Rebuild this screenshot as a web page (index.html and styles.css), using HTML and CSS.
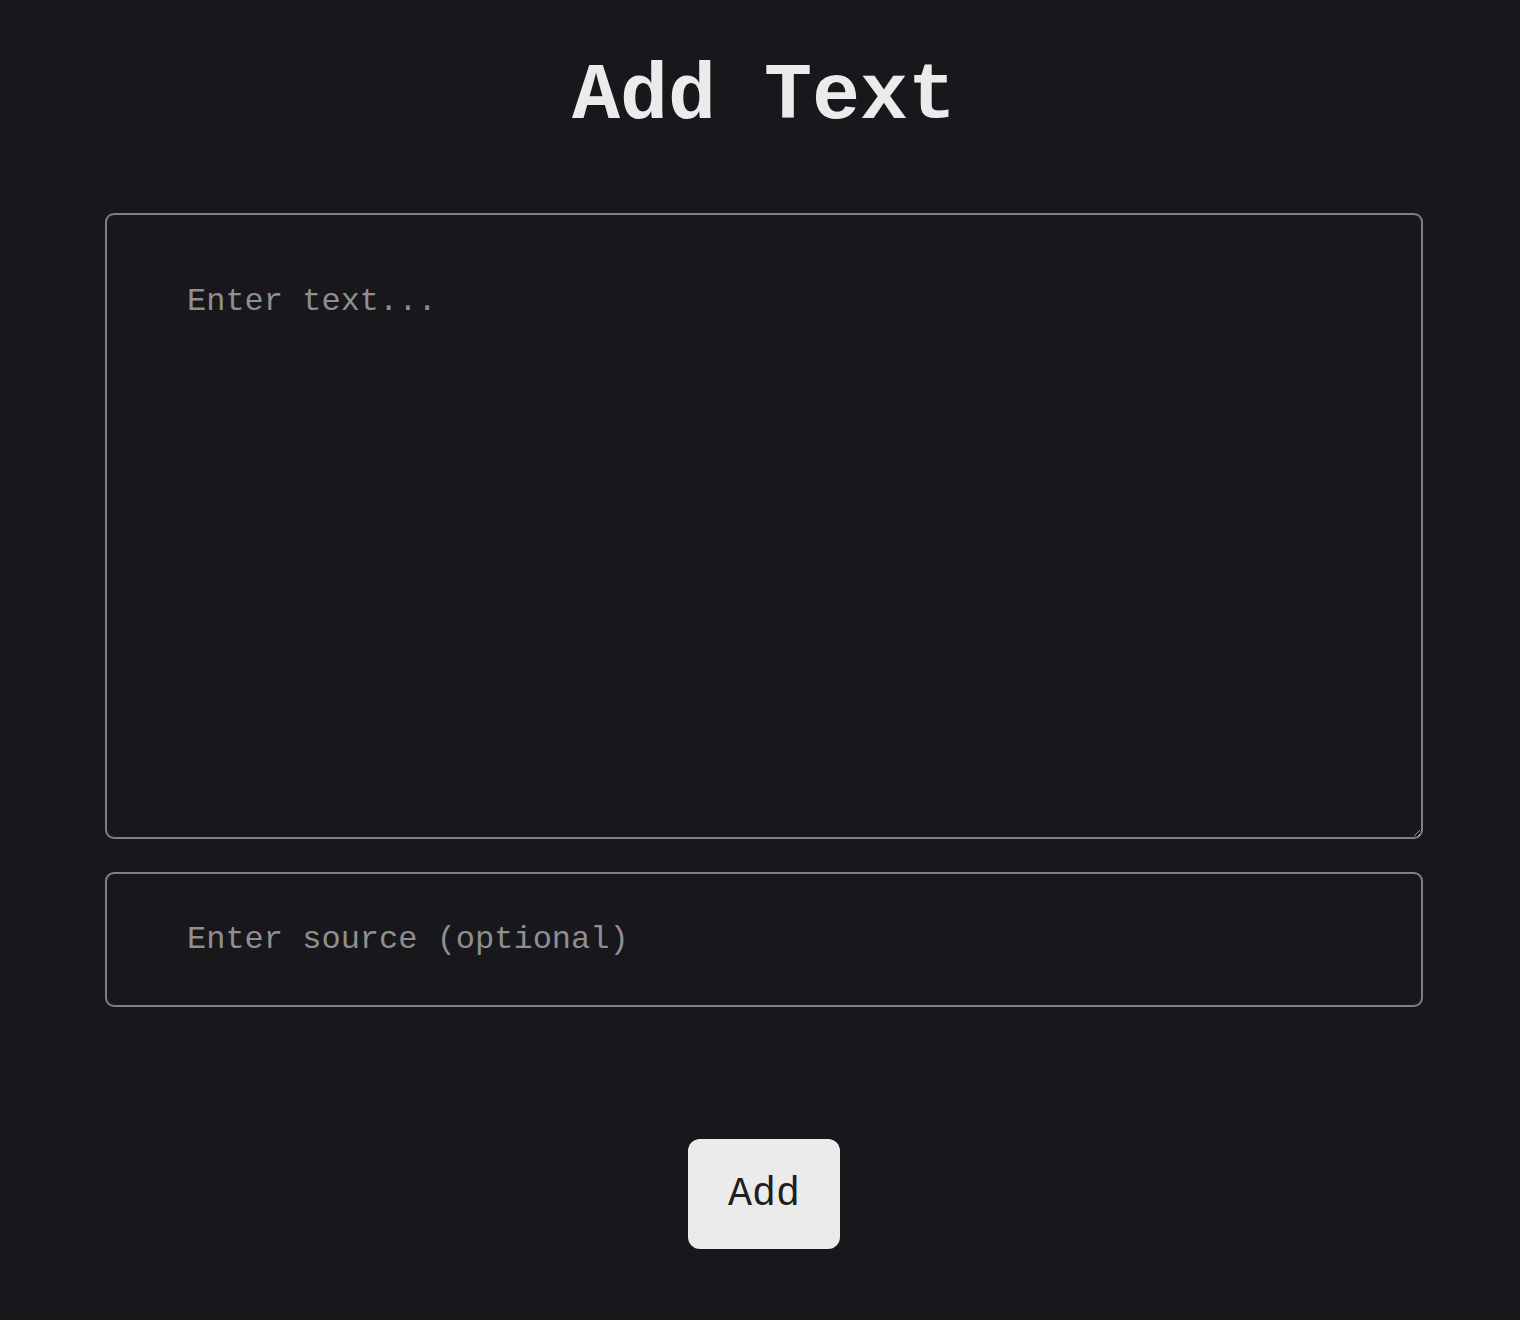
FILE: index.html
```html
<!DOCTYPE html>
<html lang="en">
<head>
<meta charset="utf-8">
<title>Add Text</title>
<link rel="stylesheet" href="styles.css">
</head>
<body>
<main class="page">
  <h1 class="title">Add Text</h1>
  <form class="form">
    <textarea class="field field-text" placeholder="Enter text..."></textarea>
    <input class="field field-source" type="text" placeholder="Enter source (optional)">
    <div class="actions">
      <button class="btn" type="button">Add</button>
    </div>
  </form>
</main>
</body>
</html>
```
FILE: styles.css
```css
html, body {
  margin: 0;
  padding: 0;
  background: #18171c;
}
body {
  font-family: "Courier New", "Liberation Mono", monospace;
  color: #ebebeb;
}
.page {
  padding: 52px 97px 60px 105px;
}
.title {
  margin: 0 0 71px;
  text-align: center;
  font-size: 80px;
  font-weight: 700;
  line-height: 90px;
  color: #ebebeb;
}
.form {
  display: flex;
  flex-direction: column;
}
.field {
  box-sizing: border-box;
  width: 100%;
  background: #18171c;
  border: 2px solid #808080;
  border-radius: 9px;
  font-family: inherit;
  font-size: 32px;
  color: #ebebeb;
  outline: none;
}
.field::placeholder {
  color: #8f8f8f;
}
.field-text {
  height: 626px;
  padding: 68px 80px;
  resize: vertical;
}
.field-source {
  height: 135px;
  margin-top: 33px;
  padding: 0 80px;
}
.actions {
  display: flex;
  justify-content: center;
  margin-top: 132px;
}
.btn {
  width: 152px;
  height: 110px;
  border: none;
  border-radius: 12px;
  background: #ebebeb;
  color: #1e1e1e;
  font-family: inherit;
  font-size: 40px;
  padding: 0;
  cursor: pointer;
}
```
